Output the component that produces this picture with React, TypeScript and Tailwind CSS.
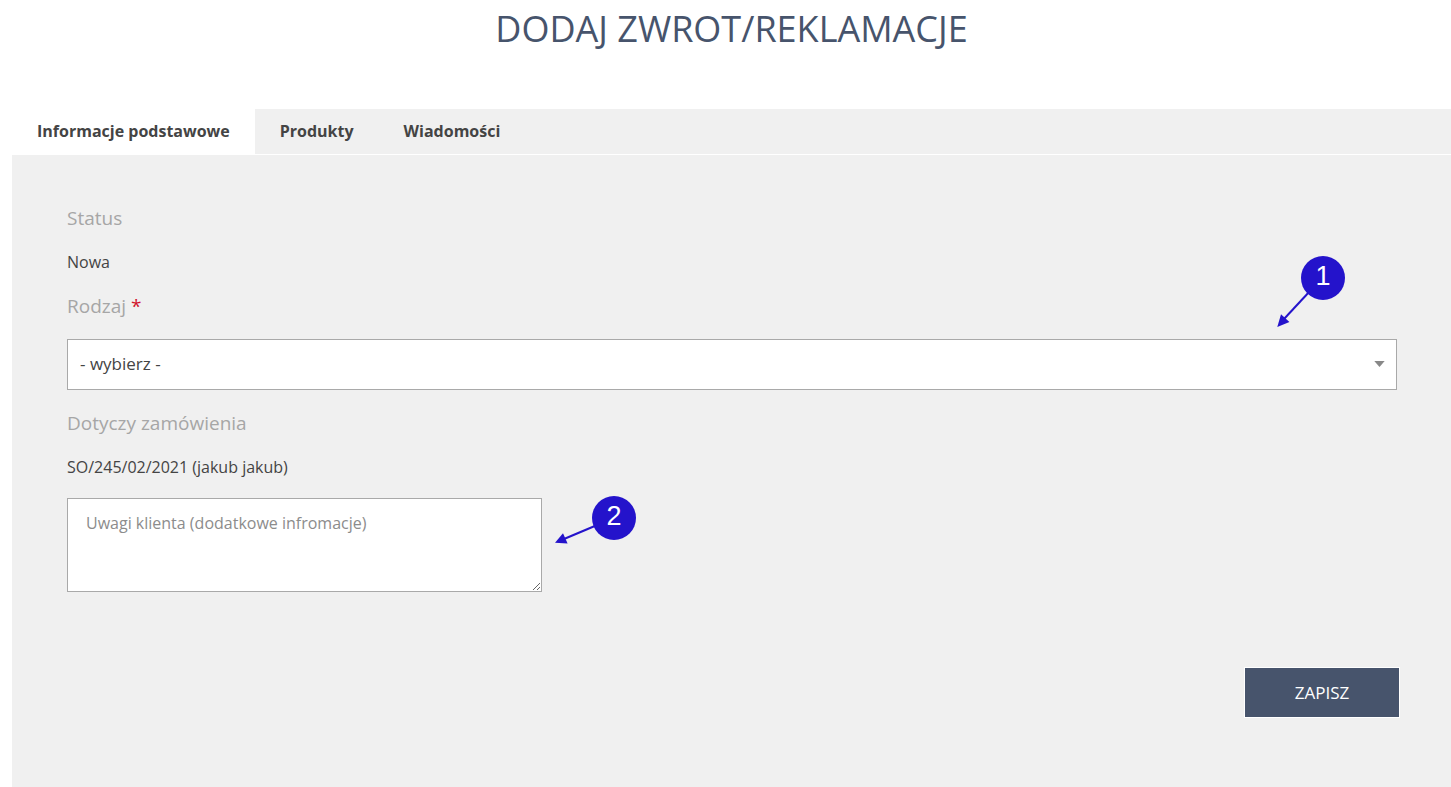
import { useState } from "react";

const tabs = ["Informacje podstawowe", "Produkty", "Wiadomości"];

export default function App() {
  const [active, setActive] = useState(0);

  return (
    <main className="flex min-h-screen flex-col bg-white pl-3 font-['Open_Sans','Noto_Sans',sans-serif] text-base text-[#444]">
      <h1 className="pt-1 text-center text-4xl leading-[50px] text-[#47546c]">DODAJ ZWROT/REKLAMACJE</h1>

      <div role="tablist" className="mt-[55px] flex bg-[#f0f0f0]">
        {tabs.map((tab, i) => (
          <button
            key={tab}
            type="button"
            role="tab"
            aria-selected={i === active}
            onClick={() => setActive(i)}
            className={`h-[45px] px-[25px] pb-0.5 font-bold ${i === active ? "bg-white" : ""}`}
          >
            {tab}
          </button>
        ))}
      </div>

      <form className="mt-px flex grow flex-col bg-[#f0f0f0] pl-[55px] pr-[54px] pt-[41px]" onSubmit={(e) => e.preventDefault()}>
        <h2 className="text-[19px] leading-[44px] text-[#a6a6a6]">Status</h2>
        <p className="leading-[44px]">Nowa</p>

        <label htmlFor="kind" className="text-[19px] leading-[44px] text-[#a6a6a6]">
          Rodzaj <span className="text-[#d0142c]">*</span>
        </label>
        <div className="relative mt-[11px]">
          <select
            id="kind"
            className="block h-[51px] w-full appearance-none border border-[#a9a9a9] bg-white px-3 pb-0.5 text-[17px] text-[#444]"
          >
            <option>- wybierz -</option>
          </select>
          <svg className="pointer-events-none absolute right-3 top-[22px]" width="11" height="6" viewBox="0 0 11 6" aria-hidden="true">
            <path d="M0.3 0h10.4L5.5 6z" fill="#888" />
          </svg>
          <svg className="pointer-events-none absolute -top-[85px] right-[50px]" width="72" height="74" viewBox="1275 254 72 74">
            <path d="M1310 291L1284 319" stroke="#2413cb" strokeWidth="2" />
            <path d="M1277.3 327L1281 314.3L1289.4 322z" fill="#2413cb" />
            <circle cx="1323" cy="278" r="22" fill="#2413cb" />
            <text x="1323" y="285" textAnchor="middle" fill="#fff" className="font-['Liberation_Sans',sans-serif] text-[27px]">
              1
            </text>
          </svg>
        </div>

        <h2 className="mt-[11px] text-[19px] leading-[44px] text-[#a6a6a6]">Dotyczy zamówienia</h2>
        <p className="leading-[44px]">SO/245/02/2021 (jakub jakub)</p>

        <div className="relative mt-[9px] w-[475px] max-w-full">
          <textarea
            aria-label="Uwagi klienta"
            placeholder="Uwagi klienta (dodatkowe infromacje)"
            className="block h-[94px] w-full resize border border-[#a9a9a9] bg-white px-[18px] py-3 text-base text-[#444] placeholder:text-[#8c8c8c]"
          />
          <svg className="pointer-events-none absolute -top-1 left-full ml-[11px]" width="85" height="52" viewBox="553 494 85 52">
            <path d="M596 525.5L564 539" stroke="#2413cb" strokeWidth="2" />
            <path d="M555 542.7L563 533.3L567.6 543.6z" fill="#2413cb" />
            <circle cx="614" cy="518" r="22" fill="#2413cb" />
            <text x="614" y="525" textAnchor="middle" fill="#fff" className="font-['Liberation_Sans',sans-serif] text-[27px]">
              2
            </text>
          </svg>
        </div>

        <button
          type="submit"
          className="-mr-[3px] mb-10 mt-[75px] h-[51px] w-[156px] self-end border border-white bg-[#47546c] text-[17px] text-white"
        >
          ZAPISZ
        </button>
      </form>
    </main>
  );
}
